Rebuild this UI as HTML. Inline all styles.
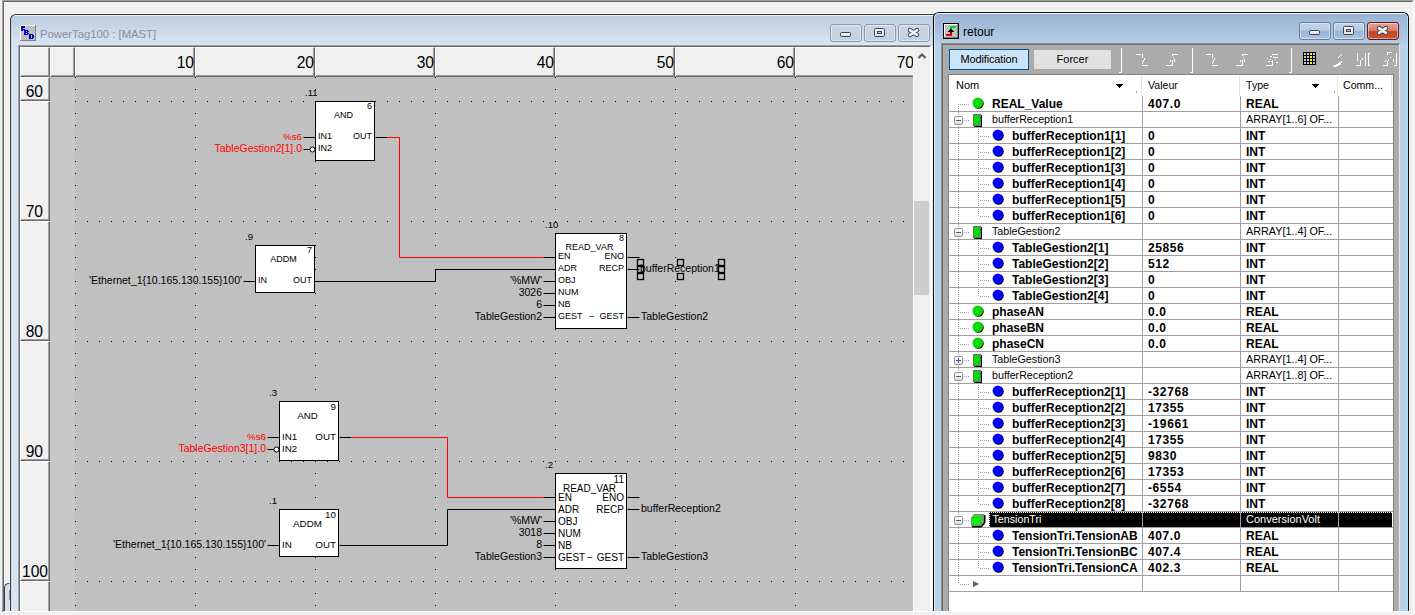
<!DOCTYPE html><html><head><meta charset="utf-8"><style>
html,body{margin:0;padding:0;}
body{width:1415px;height:615px;overflow:hidden;position:relative;background:#f0f0f0;font-family:"Liberation Sans", sans-serif;}
div{position:absolute;box-sizing:border-box;}
.t{white-space:nowrap;line-height:1;}
svg{position:absolute;left:0;top:0;overflow:visible;}
</style></head><body>
<div style="left:2px;top:0px;width:1412px;height:613px;border-left:1px solid #a0a0a0;border-top:1px solid #a0a0a0;border-right:1px solid #ffffff;border-bottom:1px solid #ffffff;"></div>
<div style="left:3px;top:1px;width:1410px;height:611px;border-left:1px solid #696969;border-top:1px solid #696969;border-right:1px solid #f0f0f0;border-bottom:1px solid #f0f0f0;"></div>
<div style="left:4px;top:583px;width:7px;height:29px;background:#d3e1ef;border-left:1px solid #3a3a3a;border-top:1px solid #3a3a3a;border-top-left-radius:5px;"></div>
<div style="left:9px;top:590px;width:2px;height:10px;background:#000;"></div>
<div style="left:10px;top:14px;width:925px;height:597px;border-radius:6px 0 0 0;background:linear-gradient(#bbccdc 0px,#d9e5f2 31px,#d7e4f2 32px);"></div>
<svg width="1415" height="615"><path d="M10.5 611V19.5A5 5 0 0 1 15.5 14.5H935" stroke="#3b3b3b" stroke-width="1.1" fill="none"/><path d="M9.5 611V19.5A6 6 0 0 1 15.5 13.5H935" stroke="#fff" stroke-width="0.8" fill="none" opacity="0.7"/></svg>
<div style="left:15px;top:15px;width:919px;height:1px;background:#eef3f8;"></div>
<svg width="1415" height="615" style="left:0;top:0" shape-rendering="crispEdges">
<rect x="20" y="25" width="16" height="16" fill="#c0c0c0"/>
<rect x="20" y="25" width="16" height="1" fill="#fff"/><rect x="20" y="25" width="1" height="16" fill="#fff"/>
<rect x="20" y="40" width="16" height="1" fill="#808080"/><rect x="35" y="25" width="1" height="16" fill="#808080"/>
<path fill="#0000c8" fill-rule="evenodd" d="M21 26h4v2h-2v1h2v1h-2v1h-2z M24 30h4v1h1v1h-1v1h1v1h-1v1h-4z M26 31v1h1v-1z M26 33v1h1v-1z M29 34h4v1h1v3h-1v1h-4z M31 35v3h1v-3z"/>
</svg>
<div class="t" style="left:40px;top:28.8px;font-size:11.3px;color:#8d8d9c;">PowerTag100 : [MAST]</div>
<div style="left:830px;top:24px;width:32px;height:18px;border:1px solid #8c9bb3;border-radius:3px;background:linear-gradient(#c9d6e4,#c3d1e0);box-shadow:inset 0 0 0 1px rgba(255,255,255,0.45);"></div>
<div style="left:840px;top:32px;width:11px;height:5px;background:linear-gradient(#fafafa,#e0e0e0);border:1px solid #3c4350;border-radius:1.5px;"></div>
<div style="left:864px;top:24px;width:32px;height:18px;border:1px solid #8c9bb3;border-radius:3px;background:linear-gradient(#c9d6e4,#c3d1e0);box-shadow:inset 0 0 0 1px rgba(255,255,255,0.45);"></div>
<div style="left:874px;top:28px;width:11px;height:9px;background:linear-gradient(#fafafa,#e0e0e0);border:1px solid #3c4350;border-radius:1.5px;"></div>
<div style="left:877px;top:31px;width:5px;height:3px;border:1px solid #3c4350;background:#b8c8dc;"></div>
<div style="left:898px;top:24px;width:32px;height:18px;border:1px solid #8c9bb3;border-radius:3px;background:linear-gradient(#c9d6e4,#c3d1e0);box-shadow:inset 0 0 0 1px rgba(255,255,255,0.45);"></div>
<svg width="1415" height="615"><path d="M910.0 30.2L917.0 34.8M917.0 30.2L910.0 34.8" stroke="#3c4350" stroke-width="4.6" stroke-linecap="round"/><path d="M910.0 30.2L917.0 34.8M917.0 30.2L910.0 34.8" stroke="#f6f6f6" stroke-width="2.6" stroke-linecap="round"/></svg>
<div style="left:18px;top:45px;width:913px;height:566px;background:#f0f0f0;border-left:1px solid #a0a0a0;border-top:1px solid #a0a0a0;"></div>
<div style="left:19px;top:46px;width:911px;height:1px;background:#696969;"></div>
<div style="left:19px;top:46px;width:1px;height:565px;background:#696969;"></div>
<div style="left:50px;top:77px;width:863px;height:534px;background:#c0c0c0;"></div>
<div style="left:50px;top:77px;width:25px;height:534px;background:#c7c7c7;"></div>
<div style="left:20px;top:47px;width:30px;height:30px;background:#f0f0f0;border-left:1px solid #fff;border-top:1px solid #fff;border-right:1px solid #696969;border-bottom:1px solid #696969;box-shadow:inset -1px -1px 0 #a0a0a0;"></div>
<div style="left:50px;top:47px;width:25px;height:30px;background:#f0f0f0;border-left:1px solid #fff;border-top:1px solid #fff;border-right:1px solid #696969;border-bottom:1px solid #696969;box-shadow:inset -1px -1px 0 #a0a0a0;"></div>
<div style="left:75px;top:47px;width:120px;height:30px;background:#f0f0f0;border-left:1px solid #fff;border-top:1px solid #fff;border-right:1px solid #696969;border-bottom:1px solid #696969;box-shadow:inset -1px -1px 0 #a0a0a0;"></div>
<div class="t" style="right:1221px;top:55px;font-size:15.6px;color:#000;">10</div>
<div style="left:195px;top:47px;width:120px;height:30px;background:#f0f0f0;border-left:1px solid #fff;border-top:1px solid #fff;border-right:1px solid #696969;border-bottom:1px solid #696969;box-shadow:inset -1px -1px 0 #a0a0a0;"></div>
<div class="t" style="right:1101px;top:55px;font-size:15.6px;color:#000;">20</div>
<div style="left:315px;top:47px;width:120px;height:30px;background:#f0f0f0;border-left:1px solid #fff;border-top:1px solid #fff;border-right:1px solid #696969;border-bottom:1px solid #696969;box-shadow:inset -1px -1px 0 #a0a0a0;"></div>
<div class="t" style="right:981px;top:55px;font-size:15.6px;color:#000;">30</div>
<div style="left:435px;top:47px;width:120px;height:30px;background:#f0f0f0;border-left:1px solid #fff;border-top:1px solid #fff;border-right:1px solid #696969;border-bottom:1px solid #696969;box-shadow:inset -1px -1px 0 #a0a0a0;"></div>
<div class="t" style="right:861px;top:55px;font-size:15.6px;color:#000;">40</div>
<div style="left:555px;top:47px;width:120px;height:30px;background:#f0f0f0;border-left:1px solid #fff;border-top:1px solid #fff;border-right:1px solid #696969;border-bottom:1px solid #696969;box-shadow:inset -1px -1px 0 #a0a0a0;"></div>
<div class="t" style="right:741px;top:55px;font-size:15.6px;color:#000;">50</div>
<div style="left:675px;top:47px;width:120px;height:30px;background:#f0f0f0;border-left:1px solid #fff;border-top:1px solid #fff;border-right:1px solid #696969;border-bottom:1px solid #696969;box-shadow:inset -1px -1px 0 #a0a0a0;"></div>
<div class="t" style="right:621px;top:55px;font-size:15.6px;color:#000;">60</div>
<div style="left:795px;top:47px;width:120px;height:30px;background:#f0f0f0;border-left:1px solid #fff;border-top:1px solid #fff;border-right:1px solid #696969;border-bottom:1px solid #696969;box-shadow:inset -1px -1px 0 #a0a0a0;"></div>
<div class="t" style="right:501px;top:55px;font-size:15.6px;color:#000;">70</div>
<div style="left:20px;top:77px;width:30px;height:24px;background:#f0f0f0;border-left:1px solid #fff;border-top:1px solid #fff;border-right:1px solid #696969;border-bottom:1px solid #696969;box-shadow:inset -1px -1px 0 #a0a0a0;"></div>
<div class="t" style="right:1372px;top:84px;font-size:15.6px;color:#000;">60</div>
<div style="left:20px;top:101px;width:30px;height:120px;background:#f0f0f0;border-left:1px solid #fff;border-top:1px solid #fff;border-right:1px solid #696969;border-bottom:1px solid #696969;box-shadow:inset -1px -1px 0 #a0a0a0;"></div>
<div class="t" style="right:1372px;top:204px;font-size:15.6px;color:#000;">70</div>
<div style="left:20px;top:221px;width:30px;height:120px;background:#f0f0f0;border-left:1px solid #fff;border-top:1px solid #fff;border-right:1px solid #696969;border-bottom:1px solid #696969;box-shadow:inset -1px -1px 0 #a0a0a0;"></div>
<div class="t" style="right:1372px;top:324px;font-size:15.6px;color:#000;">80</div>
<div style="left:20px;top:341px;width:30px;height:120px;background:#f0f0f0;border-left:1px solid #fff;border-top:1px solid #fff;border-right:1px solid #696969;border-bottom:1px solid #696969;box-shadow:inset -1px -1px 0 #a0a0a0;"></div>
<div class="t" style="right:1372px;top:444px;font-size:15.6px;color:#000;">90</div>
<div style="left:20px;top:461px;width:30px;height:120px;background:#f0f0f0;border-left:1px solid #fff;border-top:1px solid #fff;border-right:1px solid #696969;border-bottom:1px solid #696969;box-shadow:inset -1px -1px 0 #a0a0a0;"></div>
<div class="t" style="left:22px;top:564px;font-size:15.6px;color:#000;">100</div>
<div style="left:20px;top:581px;width:30px;height:44px;background:#f0f0f0;border-left:1px solid #fff;border-top:1px solid #fff;border-right:1px solid #696969;border-bottom:1px solid #696969;box-shadow:inset -1px -1px 0 #a0a0a0;"></div>
<div style="left:913px;top:47px;width:18px;height:564px;background:#f0f0f0;border-left:1px solid #fafafa;"></div>
<div style="left:914px;top:201px;width:15px;height:94px;background:#cdcdcd;"></div>
<svg width="1415" height="615"><path d="M918.5 58L922 54.5L925.5 58" stroke="#555" stroke-width="2.1" fill="none"/></svg>
<div style="left:930px;top:46px;width:3px;height:565px;background:#fafafa;"></div>
<svg width="1415" height="615" shape-rendering="crispEdges">
<defs>
<pattern id="ph" patternUnits="userSpaceOnUse" x="75" y="101" width="12" height="120"><rect width="1" height="1" fill="#000"/></pattern>
<pattern id="pv" patternUnits="userSpaceOnUse" x="75" y="77" width="120" height="12"><rect width="1" height="1" fill="#000"/></pattern>
</defs>
<rect x="75" y="77" width="838" height="534" fill="url(#ph)"/>
<rect x="75" y="77" width="838" height="534" fill="url(#pv)"/>
</svg>
<div style="left:315px;top:101px;width:60px;height:60px;background:#fff;border:1px solid #000;"></div>
<div class="t" style="left:305px;top:87.87px;font-size:9.6px;color:#000;">.11</div>
<div class="t" style="right:1043px;top:102.38px;font-size:9.0px;color:#000;letter-spacing:0px;">6</div>
<div class="t" style="left:313.5px;width:60px;text-align:center;top:111.38px;font-size:9.0px;color:#000;letter-spacing:0px;">AND</div>
<div class="t" style="left:318px;top:132.38px;font-size:9.0px;color:#000;letter-spacing:0px;">IN1</div>
<div class="t" style="left:318px;top:144.38px;font-size:9.0px;color:#000;letter-spacing:0px;">IN2</div>
<div class="t" style="right:1043px;top:132.38px;font-size:9.0px;color:#000;letter-spacing:0px;">OUT</div>
<div class="t" style="right:1113px;top:131.7px;font-size:9.8px;color:#f00;">%s6</div>
<div class="t" style="right:1113px;top:143.11px;font-size:10.5px;color:#f00;">TableGestion2[1].0</div>
<div style="left:255px;top:245px;width:60px;height:48px;background:#fff;border:1px solid #000;"></div>
<div class="t" style="left:245px;top:231.87px;font-size:9.6px;color:#000;">.9</div>
<div class="t" style="right:1103px;top:246.38px;font-size:9.0px;color:#000;letter-spacing:0px;">7</div>
<div class="t" style="left:253.5px;width:60px;text-align:center;top:255.38px;font-size:9.0px;color:#000;letter-spacing:0px;">ADDM</div>
<div class="t" style="left:258px;top:276.38px;font-size:9.0px;color:#000;letter-spacing:0px;">IN</div>
<div class="t" style="right:1103px;top:276.38px;font-size:9.0px;color:#000;letter-spacing:0px;">OUT</div>
<div class="t" style="right:1173px;top:275.11px;font-size:10.5px;color:#000;">'Ethernet_1{10.165.130.155}100'</div>
<div style="left:555px;top:233px;width:72px;height:96px;background:#fff;border:1px solid #000;"></div>
<div class="t" style="left:545px;top:219.87px;font-size:9.6px;color:#000;">.10</div>
<div class="t" style="right:791px;top:234.38px;font-size:9.0px;color:#000;letter-spacing:0px;">8</div>
<div class="t" style="left:553.5px;width:72px;text-align:center;top:243.38px;font-size:9.0px;color:#000;letter-spacing:0px;">READ_VAR</div>
<div class="t" style="left:558px;top:252.38px;font-size:9.0px;color:#000;letter-spacing:0px;">EN</div>
<div class="t" style="left:558px;top:264.38px;font-size:9.0px;color:#000;letter-spacing:0px;">ADR</div>
<div class="t" style="left:558px;top:276.38px;font-size:9.0px;color:#000;letter-spacing:0px;">OBJ</div>
<div class="t" style="left:558px;top:288.38px;font-size:9.0px;color:#000;letter-spacing:0px;">NUM</div>
<div class="t" style="left:558px;top:300.38px;font-size:9.0px;color:#000;letter-spacing:0px;">NB</div>
<div class="t" style="left:558px;top:312.38px;font-size:9.0px;color:#000;letter-spacing:0px;">GEST</div>
<div class="t" style="right:791px;top:252.38px;font-size:9.0px;color:#000;letter-spacing:0px;">ENO</div>
<div class="t" style="right:791px;top:264.38px;font-size:9.0px;color:#000;letter-spacing:0px;">RECP</div>
<div class="t" style="right:791px;top:312.38px;font-size:9.0px;color:#000;letter-spacing:0px;">GEST</div>
<div class="t" style="left:589px;top:312.38px;font-size:9px;">&ndash;</div>
<div class="t" style="right:873px;top:275.11px;font-size:10.5px;color:#000;">'%MW'</div>
<div class="t" style="right:873px;top:287.11px;font-size:10.5px;color:#000;">3026</div>
<div class="t" style="right:873px;top:299.11px;font-size:10.5px;color:#000;">6</div>
<div class="t" style="right:873px;top:311.11px;font-size:10.5px;color:#000;">TableGestion2</div>
<div class="t" style="left:640px;top:263.11px;font-size:10.5px;color:#000;">bufferReception1</div>
<div class="t" style="left:641px;top:311.11px;font-size:10.5px;color:#000;">TableGestion2</div>
<div style="left:279px;top:401px;width:60px;height:60px;background:#fff;border:1px solid #000;"></div>
<div class="t" style="left:269px;top:387.87px;font-size:9.6px;color:#000;">.3</div>
<div class="t" style="right:1079px;top:401.7px;font-size:9.8px;color:#000;letter-spacing:0px;">9</div>
<div class="t" style="left:277.5px;width:60px;text-align:center;top:410.7px;font-size:9.8px;color:#000;letter-spacing:0px;">AND</div>
<div class="t" style="left:282px;top:431.7px;font-size:9.8px;color:#000;letter-spacing:0px;">IN1</div>
<div class="t" style="left:282px;top:443.7px;font-size:9.8px;color:#000;letter-spacing:0px;">IN2</div>
<div class="t" style="right:1079px;top:431.7px;font-size:9.8px;color:#000;letter-spacing:0px;">OUT</div>
<div class="t" style="right:1149px;top:431.7px;font-size:9.8px;color:#f00;">%s6</div>
<div class="t" style="right:1149px;top:443.11px;font-size:10.5px;color:#f00;">TableGestion3[1].0</div>
<div style="left:279px;top:509px;width:60px;height:48px;background:#fff;border:1px solid #000;"></div>
<div class="t" style="left:269px;top:495.87px;font-size:9.6px;color:#000;">.1</div>
<div class="t" style="right:1079px;top:509.7px;font-size:9.8px;color:#000;letter-spacing:0px;">10</div>
<div class="t" style="left:277.5px;width:60px;text-align:center;top:518.7px;font-size:9.8px;color:#000;letter-spacing:0px;">ADDM</div>
<div class="t" style="left:282px;top:539.7px;font-size:9.8px;color:#000;letter-spacing:0px;">IN</div>
<div class="t" style="right:1079px;top:539.7px;font-size:9.8px;color:#000;letter-spacing:0px;">OUT</div>
<div class="t" style="right:1149px;top:539.11px;font-size:10.5px;color:#000;">'Ethernet_1{10.165.130.155}100'</div>
<div style="left:555px;top:473px;width:72px;height:96px;background:#fff;border:1px solid #000;"></div>
<div class="t" style="left:545px;top:459.87px;font-size:9.6px;color:#000;">.2</div>
<div class="t" style="right:791px;top:474.54px;font-size:10px;color:#000;letter-spacing:0px;">11</div>
<div class="t" style="left:553.5px;width:72px;text-align:center;top:483.54px;font-size:10px;color:#000;letter-spacing:0px;">READ_VAR</div>
<div class="t" style="left:558px;top:492.54px;font-size:10px;color:#000;letter-spacing:0px;">EN</div>
<div class="t" style="left:558px;top:504.54px;font-size:10px;color:#000;letter-spacing:0px;">ADR</div>
<div class="t" style="left:558px;top:516.53px;font-size:10px;color:#000;letter-spacing:0px;">OBJ</div>
<div class="t" style="left:558px;top:528.53px;font-size:10px;color:#000;letter-spacing:0px;">NUM</div>
<div class="t" style="left:558px;top:540.53px;font-size:10px;color:#000;letter-spacing:0px;">NB</div>
<div class="t" style="left:558px;top:552.53px;font-size:10px;color:#000;letter-spacing:0px;">GEST</div>
<div class="t" style="right:791px;top:492.54px;font-size:10px;color:#000;letter-spacing:0px;">ENO</div>
<div class="t" style="right:791px;top:504.54px;font-size:10px;color:#000;letter-spacing:0px;">RECP</div>
<div class="t" style="right:791px;top:552.53px;font-size:10px;color:#000;letter-spacing:0px;">GEST</div>
<div class="t" style="left:587px;top:552.53px;font-size:10px;">&minus;</div>
<div class="t" style="right:873px;top:515.11px;font-size:10.5px;color:#000;">'%MW'</div>
<div class="t" style="right:873px;top:527.11px;font-size:10.5px;color:#000;">3018</div>
<div class="t" style="right:873px;top:539.11px;font-size:10.5px;color:#000;">8</div>
<div class="t" style="right:873px;top:551.11px;font-size:10.5px;color:#000;">TableGestion3</div>
<div class="t" style="left:641px;top:503.11px;font-size:10.5px;color:#000;">bufferReception2</div>
<div class="t" style="left:641px;top:551.11px;font-size:10.5px;color:#000;">TableGestion3</div>
<svg width="1415" height="615"><path d="M303.5 137.5L315.5 137.5" stroke="#000" stroke-width="1"/><path d="M303.5 149.5L310.5 149.5" stroke="#000" stroke-width="1"/><circle cx="312.5" cy="149.5" r="2.5" fill="#fff" stroke="#000"/><path d="M375.5 137.5L387.5 137.5" stroke="#000" stroke-width="1"/><path d="M387.5 137.5L399.5 137.5" stroke="#f00" stroke-width="1"/><path d="M399.5 137.5L399.5 257.5" stroke="#f00" stroke-width="1"/><path d="M399.5 257.5L543.5 257.5" stroke="#f00" stroke-width="1"/><path d="M543.5 257.5L555.5 257.5" stroke="#000" stroke-width="1"/><path d="M243.5 281.5L255.5 281.5" stroke="#000" stroke-width="1"/><path d="M315.5 281.5L435.5 281.5" stroke="#000" stroke-width="1"/><path d="M435.5 281.5L435.5 269.5" stroke="#000" stroke-width="1"/><path d="M435.5 269.5L555.5 269.5" stroke="#000" stroke-width="1"/><path d="M543.5 281.5L555.5 281.5" stroke="#000" stroke-width="1"/><path d="M543.5 293.5L555.5 293.5" stroke="#000" stroke-width="1"/><path d="M543.5 305.5L555.5 305.5" stroke="#000" stroke-width="1"/><path d="M543.5 317.5L555.5 317.5" stroke="#000" stroke-width="1"/><path d="M627.5 257.5L639.5 257.5" stroke="#000" stroke-width="1"/><path d="M627.5 269.5L639.5 269.5" stroke="#000" stroke-width="1"/><path d="M627.5 317.5L639.5 317.5" stroke="#000" stroke-width="1"/><rect x="637.5" y="259.5" width="6" height="6" fill="none" stroke="#000" stroke-width="1.3"/><rect x="637.5" y="266.5" width="6" height="6" fill="none" stroke="#000" stroke-width="1.3"/><rect x="637.5" y="273.5" width="6" height="6" fill="none" stroke="#000" stroke-width="1.3"/><rect x="677.5" y="259.5" width="6" height="6" fill="none" stroke="#000" stroke-width="1.3"/><rect x="677.5" y="273.5" width="6" height="6" fill="none" stroke="#000" stroke-width="1.3"/><rect x="718.5" y="259.5" width="6" height="6" fill="none" stroke="#000" stroke-width="1.3"/><rect x="718.5" y="266.5" width="6" height="6" fill="none" stroke="#000" stroke-width="1.3"/><rect x="718.5" y="273.5" width="6" height="6" fill="none" stroke="#000" stroke-width="1.3"/><path d="M267.5 437.5L279.5 437.5" stroke="#000" stroke-width="1"/><path d="M267.5 449.5L274.5 449.5" stroke="#000" stroke-width="1"/><circle cx="276.5" cy="449.5" r="2.5" fill="#fff" stroke="#000"/><path d="M339.5 437.5L351.5 437.5" stroke="#000" stroke-width="1"/><path d="M351.5 437.5L447.5 437.5" stroke="#f00" stroke-width="1"/><path d="M447.5 437.5L447.5 497.5" stroke="#f00" stroke-width="1"/><path d="M447.5 497.5L543.5 497.5" stroke="#f00" stroke-width="1"/><path d="M543.5 497.5L555.5 497.5" stroke="#000" stroke-width="1"/><path d="M267.5 545.5L279.5 545.5" stroke="#000" stroke-width="1"/><path d="M339.5 545.5L447.5 545.5" stroke="#000" stroke-width="1"/><path d="M447.5 545.5L447.5 509.5" stroke="#000" stroke-width="1"/><path d="M447.5 509.5L555.5 509.5" stroke="#000" stroke-width="1"/><path d="M543.5 521.5L555.5 521.5" stroke="#000" stroke-width="1"/><path d="M543.5 533.5L555.5 533.5" stroke="#000" stroke-width="1"/><path d="M543.5 545.5L555.5 545.5" stroke="#000" stroke-width="1"/><path d="M543.5 557.5L555.5 557.5" stroke="#000" stroke-width="1"/><path d="M627.5 497.5L639.5 497.5" stroke="#000" stroke-width="1"/><path d="M627.5 509.5L639.5 509.5" stroke="#000" stroke-width="1"/><path d="M627.5 557.5L639.5 557.5" stroke="#000" stroke-width="1"/></svg>
<div style="left:933px;top:12px;width:476px;height:599px;border-radius:6px 6px 0 0;background:linear-gradient(#98b2d0 0px,#b4cce6 31px,#b9d1ea 32px);"></div>
<svg width="1415" height="615"><path d="M933.5 611V17.5A5 5 0 0 1 938.5 12.5H1403.5A5 5 0 0 1 1408.5 17.5V611" stroke="#111" stroke-width="1.1" fill="none"/><path d="M933 14.5A6 6 0 0 1 938.5 11.5H1403.5A6 6 0 0 1 1409.5 17.5V611" stroke="#fff" stroke-width="0.8" fill="none" opacity="0.7"/><path d="M934.5 611V18A4 4 0 0 1 938.5 13.5" stroke="#fff" stroke-width="1" fill="none" opacity="0.6"/></svg>
<div style="left:937px;top:13px;width:468px;height:1px;background:#f0f6fc;"></div>
<div style="left:1407px;top:16px;width:1px;height:595px;background:#9fe6fb;"></div>
<svg width="1415" height="615" shape-rendering="crispEdges">
<rect x="943" y="23" width="16" height="16" fill="#000"/>
<rect x="944" y="24" width="14" height="14" fill="#c0c0c0"/>
<rect x="944" y="24" width="14" height="1" fill="#fff"/><rect x="944" y="24" width="1" height="14" fill="#fff"/>
<rect x="944" y="37" width="14" height="1" fill="#808080"/><rect x="957" y="24" width="1" height="14" fill="#808080"/>
<rect x="950" y="26" width="6" height="2" fill="#00e000"/><rect x="950" y="27" width="2" height="3" fill="#00c000"/>
<path d="M948 31h6v1h-6z M949 30h4v1h-4z M950 29h2v1h-2z" fill="#000"/>
<rect x="950" y="32" width="2" height="3" fill="#a00000"/><rect x="946" y="34" width="6" height="2" fill="#f00000"/>
</svg>
<div class="t" style="left:963px;top:26.2px;font-size:12px;color:#000;">retour</div>
<div style="left:1299px;top:22px;width:32px;height:18px;border:1px solid #6a7f9c;border-radius:3px;background:linear-gradient(#c3d5ea 0%,#b4c9e3 45%,#97b3d6 55%,#a9c3e2 100%);box-shadow:inset 0 0 0 1px rgba(255,255,255,0.45);"></div>
<div style="left:1309px;top:30px;width:11px;height:5px;background:linear-gradient(#fafafa,#e0e0e0);border:1px solid #3c4350;border-radius:1.5px;"></div>
<div style="left:1333px;top:22px;width:32px;height:18px;border:1px solid #6a7f9c;border-radius:3px;background:linear-gradient(#c3d5ea 0%,#b4c9e3 45%,#97b3d6 55%,#a9c3e2 100%);box-shadow:inset 0 0 0 1px rgba(255,255,255,0.45);"></div>
<div style="left:1343px;top:26px;width:11px;height:9px;background:linear-gradient(#fafafa,#e0e0e0);border:1px solid #3c4350;border-radius:1.5px;"></div>
<div style="left:1346px;top:29px;width:5px;height:3px;border:1px solid #3c4350;background:#b8c8dc;"></div>
<div style="left:1367px;top:22px;width:32px;height:18px;border:1px solid #5a1c1c;border-radius:3px;background:linear-gradient(#e8a395 0%,#d9826f 45%,#c0452a 55%,#c75436 100%);box-shadow:inset 0 0 0 1px rgba(255,255,255,0.45);"></div>
<svg width="1415" height="615"><path d="M1379.0 28.2L1386.0 32.8M1386.0 28.2L1379.0 32.8" stroke="#3c4350" stroke-width="4.6" stroke-linecap="round"/><path d="M1379.0 28.2L1386.0 32.8M1386.0 28.2L1379.0 32.8" stroke="#f6f6f6" stroke-width="2.6" stroke-linecap="round"/></svg>
<div style="left:941px;top:43px;width:459px;height:568px;background:#ababab;border-left:1px solid #8f8f8f;border-top:1px solid #8f8f8f;box-shadow:inset 1px 1px 0 #6e6e6e;"></div>
<div style="left:1399px;top:44px;width:1px;height:567px;background:#e8e8e8;"></div>
<div style="left:949px;top:49px;width:80px;height:21px;background:#cce4f7;border:1px solid #005499;"></div>
<div class="t" style="left:949px;top:54px;font-size:11px;letter-spacing:-0.15px;color:#000;"><span style="display:inline-block;width:80px;text-align:center;">Modification</span></div>
<div style="left:1034px;top:50px;width:77px;height:19px;background:#e1e1e1;"></div>
<div class="t" style="left:1034px;top:54px;font-size:11px;color:#000;"><span style="display:inline-block;width:77px;text-align:center;">Forcer</span></div>
<svg width="1415" height="615" shape-rendering="crispEdges"><g fill="#ffffff"><rect x="1121" y="48" width="1" height="25"/><rect x="1119" y="72" width="2" height="1"/><rect x="1192" y="48" width="1" height="25"/><rect x="1190" y="72" width="2" height="1"/><rect x="1291" y="48" width="1" height="25"/><rect x="1289" y="72" width="2" height="1"/><rect x="1136" y="54" width="5" height="1"/><rect x="1142" y="54" width="1" height="4"/><rect x="1144" y="58" width="1" height="2"/><rect x="1143" y="60" width="1" height="2"/><rect x="1142" y="62" width="1" height="2"/><rect x="1142" y="65" width="6" height="1"/><rect x="1172" y="54" width="6" height="1"/><rect x="1172" y="55" width="1" height="1"/><rect x="1173" y="57" width="1" height="1"/><rect x="1174" y="59" width="1" height="3"/><rect x="1170" y="60" width="1" height="2"/><rect x="1172" y="60" width="1" height="6"/><rect x="1166" y="65" width="6" height="1"/><rect x="1206" y="54" width="5" height="1"/><rect x="1212" y="54" width="1" height="4"/><rect x="1214" y="58" width="1" height="2"/><rect x="1213" y="60" width="1" height="2"/><rect x="1212" y="62" width="1" height="2"/><rect x="1212" y="65" width="6" height="1"/><rect x="1242" y="54" width="6" height="1"/><rect x="1242" y="55" width="1" height="1"/><rect x="1243" y="57" width="1" height="1"/><rect x="1244" y="59" width="1" height="3"/><rect x="1240" y="60" width="1" height="2"/><rect x="1242" y="60" width="1" height="6"/><rect x="1236" y="65" width="6" height="1"/><rect x="1272" y="54" width="6" height="1"/><rect x="1270" y="56" width="2" height="1"/><rect x="1273" y="57" width="5" height="1"/><rect x="1267" y="58" width="1" height="1"/><rect x="1270" y="59" width="1" height="1"/><rect x="1275" y="59" width="1" height="1"/><rect x="1268" y="61" width="2" height="1"/><rect x="1271" y="61" width="1" height="1"/><rect x="1276" y="62" width="2" height="1"/><rect x="1272" y="60" width="1" height="6"/><rect x="1266" y="65" width="6" height="1"/><path d="M1341.5 54.5L1337.5 58.5M1342.5 61.5L1333.5 66.5M1341.5 63.5L1335.5 66.5" stroke="#fff" stroke-width="1.2" fill="none"/><rect x="1357" y="53" width="1" height="8"/><rect x="1360" y="60" width="1" height="6"/><rect x="1356" y="65" width="4" height="1"/><rect x="1362" y="58" width="1" height="2"/><rect x="1365" y="53" width="1" height="13"/><rect x="1368" y="53" width="1" height="13"/><rect x="1368" y="53" width="2" height="1"/><rect x="1368" y="65" width="2" height="1"/><rect x="1387" y="52" width="5" height="1"/><rect x="1387" y="52" width="1" height="3"/><rect x="1390" y="57" width="1" height="1"/><rect x="1388" y="59" width="1" height="2"/><rect x="1385" y="60" width="1" height="2"/><rect x="1393" y="59" width="1" height="3"/><rect x="1387" y="61" width="1" height="5"/><rect x="1383" y="65" width="5" height="1"/><rect x="1396" y="53" width="1" height="13"/><rect x="1394" y="65" width="3" height="1"/></g><rect x="1303" y="52" width="13" height="13" fill="#000"/><rect x="1304" y="53" width="2" height="2" fill="#c8c8c8"/><rect x="1304" y="56" width="2" height="2" fill="#c8c8c8"/><rect x="1304" y="59" width="2" height="2" fill="#c8c8c8"/><rect x="1304" y="62" width="2" height="2" fill="#c8c8c8"/><rect x="1307" y="53" width="2" height="2" fill="#c8c8c8"/><rect x="1307" y="56" width="2" height="2" fill="#c8c8c8"/><rect x="1307" y="59" width="2" height="2" fill="#c8c8c8"/><rect x="1307" y="62" width="2" height="2" fill="#c8c8c8"/><rect x="1310" y="53" width="2" height="2" fill="#ffff00"/><rect x="1310" y="56" width="2" height="2" fill="#ffff00"/><rect x="1310" y="59" width="2" height="2" fill="#ffff00"/><rect x="1310" y="62" width="2" height="2" fill="#ffff00"/><rect x="1313" y="53" width="2" height="2" fill="#c8c8c8"/><rect x="1313" y="56" width="2" height="2" fill="#c8c8c8"/><rect x="1313" y="59" width="2" height="2" fill="#c8c8c8"/><rect x="1313" y="62" width="2" height="2" fill="#c8c8c8"/></svg>
<div style="left:948px;top:74px;width:446px;height:537px;background:#fff;border-left:1px solid #828282;border-top:1px solid #828282;border-right:1px solid #828282;"></div>
<div class="t" style="left:956px;top:80px;font-size:11px;color:#000;">Nom</div>
<div class="t" style="left:1148px;top:80px;font-size:10.6px;color:#000;">Valeur</div>
<div class="t" style="left:1246px;top:80px;font-size:10.6px;color:#000;">Type</div>
<div class="t" style="left:1343px;top:80px;font-size:10.6px;color:#000;">Comm...</div>
<svg width="1415" height="615" shape-rendering="crispEdges"><path d="M1115 84h8l-4 4z M1311 84h8l-4 4z" fill="#000"/></svg>
<div style="left:1141px;top:76px;width:1px;height:20px;background:#e5e5e5;"></div>
<div style="left:1142px;top:76px;width:1px;height:20px;background:#ffffff;"></div>
<div style="left:1239px;top:76px;width:1px;height:20px;background:#e5e5e5;"></div>
<div style="left:1240px;top:76px;width:1px;height:20px;background:#ffffff;"></div>
<div style="left:1337px;top:76px;width:1px;height:20px;background:#e5e5e5;"></div>
<div style="left:1338px;top:76px;width:1px;height:20px;background:#ffffff;"></div>
<div style="left:1391px;top:76px;width:1px;height:20px;background:#e5e5e5;"></div>
<div style="left:1392px;top:76px;width:1px;height:20px;background:#ffffff;"></div>
<div style="left:949px;top:111px;width:444px;height:1px;background:#a0a0a0;"></div>
<div style="left:949px;top:127px;width:444px;height:1px;background:#a0a0a0;"></div>
<div style="left:949px;top:143px;width:444px;height:1px;background:#a0a0a0;"></div>
<div style="left:949px;top:159px;width:444px;height:1px;background:#a0a0a0;"></div>
<div style="left:949px;top:175px;width:444px;height:1px;background:#a0a0a0;"></div>
<div style="left:949px;top:191px;width:444px;height:1px;background:#a0a0a0;"></div>
<div style="left:949px;top:207px;width:444px;height:1px;background:#a0a0a0;"></div>
<div style="left:949px;top:223px;width:444px;height:1px;background:#a0a0a0;"></div>
<div style="left:949px;top:239px;width:444px;height:1px;background:#a0a0a0;"></div>
<div style="left:949px;top:255px;width:444px;height:1px;background:#a0a0a0;"></div>
<div style="left:949px;top:271px;width:444px;height:1px;background:#a0a0a0;"></div>
<div style="left:949px;top:287px;width:444px;height:1px;background:#a0a0a0;"></div>
<div style="left:949px;top:303px;width:444px;height:1px;background:#a0a0a0;"></div>
<div style="left:949px;top:319px;width:444px;height:1px;background:#a0a0a0;"></div>
<div style="left:949px;top:335px;width:444px;height:1px;background:#a0a0a0;"></div>
<div style="left:949px;top:351px;width:444px;height:1px;background:#a0a0a0;"></div>
<div style="left:949px;top:367px;width:444px;height:1px;background:#a0a0a0;"></div>
<div style="left:949px;top:383px;width:444px;height:1px;background:#a0a0a0;"></div>
<div style="left:949px;top:399px;width:444px;height:1px;background:#a0a0a0;"></div>
<div style="left:949px;top:415px;width:444px;height:1px;background:#a0a0a0;"></div>
<div style="left:949px;top:431px;width:444px;height:1px;background:#a0a0a0;"></div>
<div style="left:949px;top:447px;width:444px;height:1px;background:#a0a0a0;"></div>
<div style="left:949px;top:463px;width:444px;height:1px;background:#a0a0a0;"></div>
<div style="left:949px;top:479px;width:444px;height:1px;background:#a0a0a0;"></div>
<div style="left:949px;top:495px;width:444px;height:1px;background:#a0a0a0;"></div>
<div style="left:949px;top:511px;width:444px;height:1px;background:#a0a0a0;"></div>
<div style="left:949px;top:527px;width:444px;height:1px;background:#a0a0a0;"></div>
<div style="left:949px;top:543px;width:444px;height:1px;background:#a0a0a0;"></div>
<div style="left:949px;top:559px;width:444px;height:1px;background:#a0a0a0;"></div>
<div style="left:949px;top:575px;width:444px;height:1px;background:#a0a0a0;"></div>
<div style="left:949px;top:591px;width:444px;height:1px;background:#a0a0a0;"></div>
<div class="t" style="left:992px;top:98px;font-size:12px;font-weight:bold;color:#000;">REAL_Value</div>
<div class="t" style="left:1148px;top:98px;font-size:12px;font-weight:bold;color:#000;letter-spacing:0.6px;">407.0</div>
<div class="t" style="left:1246px;top:98px;font-size:12px;font-weight:bold;color:#000;">REAL</div>
<div class="t" style="left:992px;top:114px;font-size:10.7px;color:#000;">bufferReception1</div>
<div class="t" style="left:1246px;top:114px;font-size:10.8px;color:#000;">ARRAY[1..6] OF...</div>
<div class="t" style="left:1012px;top:130px;font-size:12px;font-weight:bold;color:#000;">bufferReception1[1]</div>
<div class="t" style="left:1148px;top:130px;font-size:12px;font-weight:bold;color:#000;letter-spacing:0.6px;">0</div>
<div class="t" style="left:1246px;top:130px;font-size:12px;font-weight:bold;color:#000;">INT</div>
<div class="t" style="left:1012px;top:146px;font-size:12px;font-weight:bold;color:#000;">bufferReception1[2]</div>
<div class="t" style="left:1148px;top:146px;font-size:12px;font-weight:bold;color:#000;letter-spacing:0.6px;">0</div>
<div class="t" style="left:1246px;top:146px;font-size:12px;font-weight:bold;color:#000;">INT</div>
<div class="t" style="left:1012px;top:162px;font-size:12px;font-weight:bold;color:#000;">bufferReception1[3]</div>
<div class="t" style="left:1148px;top:162px;font-size:12px;font-weight:bold;color:#000;letter-spacing:0.6px;">0</div>
<div class="t" style="left:1246px;top:162px;font-size:12px;font-weight:bold;color:#000;">INT</div>
<div class="t" style="left:1012px;top:178px;font-size:12px;font-weight:bold;color:#000;">bufferReception1[4]</div>
<div class="t" style="left:1148px;top:178px;font-size:12px;font-weight:bold;color:#000;letter-spacing:0.6px;">0</div>
<div class="t" style="left:1246px;top:178px;font-size:12px;font-weight:bold;color:#000;">INT</div>
<div class="t" style="left:1012px;top:194px;font-size:12px;font-weight:bold;color:#000;">bufferReception1[5]</div>
<div class="t" style="left:1148px;top:194px;font-size:12px;font-weight:bold;color:#000;letter-spacing:0.6px;">0</div>
<div class="t" style="left:1246px;top:194px;font-size:12px;font-weight:bold;color:#000;">INT</div>
<div class="t" style="left:1012px;top:210px;font-size:12px;font-weight:bold;color:#000;">bufferReception1[6]</div>
<div class="t" style="left:1148px;top:210px;font-size:12px;font-weight:bold;color:#000;letter-spacing:0.6px;">0</div>
<div class="t" style="left:1246px;top:210px;font-size:12px;font-weight:bold;color:#000;">INT</div>
<div class="t" style="left:992px;top:226px;font-size:10.7px;color:#000;">TableGestion2</div>
<div class="t" style="left:1246px;top:226px;font-size:10.8px;color:#000;">ARRAY[1..4] OF...</div>
<div class="t" style="left:1012px;top:242px;font-size:12px;font-weight:bold;color:#000;">TableGestion2[1]</div>
<div class="t" style="left:1148px;top:242px;font-size:12px;font-weight:bold;color:#000;letter-spacing:0.6px;">25856</div>
<div class="t" style="left:1246px;top:242px;font-size:12px;font-weight:bold;color:#000;">INT</div>
<div class="t" style="left:1012px;top:258px;font-size:12px;font-weight:bold;color:#000;">TableGestion2[2]</div>
<div class="t" style="left:1148px;top:258px;font-size:12px;font-weight:bold;color:#000;letter-spacing:0.6px;">512</div>
<div class="t" style="left:1246px;top:258px;font-size:12px;font-weight:bold;color:#000;">INT</div>
<div class="t" style="left:1012px;top:274px;font-size:12px;font-weight:bold;color:#000;">TableGestion2[3]</div>
<div class="t" style="left:1148px;top:274px;font-size:12px;font-weight:bold;color:#000;letter-spacing:0.6px;">0</div>
<div class="t" style="left:1246px;top:274px;font-size:12px;font-weight:bold;color:#000;">INT</div>
<div class="t" style="left:1012px;top:290px;font-size:12px;font-weight:bold;color:#000;">TableGestion2[4]</div>
<div class="t" style="left:1148px;top:290px;font-size:12px;font-weight:bold;color:#000;letter-spacing:0.6px;">0</div>
<div class="t" style="left:1246px;top:290px;font-size:12px;font-weight:bold;color:#000;">INT</div>
<div class="t" style="left:992px;top:306px;font-size:12px;font-weight:bold;color:#000;">phaseAN</div>
<div class="t" style="left:1148px;top:306px;font-size:12px;font-weight:bold;color:#000;letter-spacing:0.6px;">0.0</div>
<div class="t" style="left:1246px;top:306px;font-size:12px;font-weight:bold;color:#000;">REAL</div>
<div class="t" style="left:992px;top:322px;font-size:12px;font-weight:bold;color:#000;">phaseBN</div>
<div class="t" style="left:1148px;top:322px;font-size:12px;font-weight:bold;color:#000;letter-spacing:0.6px;">0.0</div>
<div class="t" style="left:1246px;top:322px;font-size:12px;font-weight:bold;color:#000;">REAL</div>
<div class="t" style="left:992px;top:338px;font-size:12px;font-weight:bold;color:#000;">phaseCN</div>
<div class="t" style="left:1148px;top:338px;font-size:12px;font-weight:bold;color:#000;letter-spacing:0.6px;">0.0</div>
<div class="t" style="left:1246px;top:338px;font-size:12px;font-weight:bold;color:#000;">REAL</div>
<div class="t" style="left:992px;top:354px;font-size:10.7px;color:#000;">TableGestion3</div>
<div class="t" style="left:1246px;top:354px;font-size:10.8px;color:#000;">ARRAY[1..4] OF...</div>
<div class="t" style="left:992px;top:370px;font-size:10.7px;color:#000;">bufferReception2</div>
<div class="t" style="left:1246px;top:370px;font-size:10.8px;color:#000;">ARRAY[1..8] OF...</div>
<div class="t" style="left:1012px;top:386px;font-size:12px;font-weight:bold;color:#000;">bufferReception2[1]</div>
<div class="t" style="left:1148px;top:386px;font-size:12px;font-weight:bold;color:#000;letter-spacing:0.6px;">-32768</div>
<div class="t" style="left:1246px;top:386px;font-size:12px;font-weight:bold;color:#000;">INT</div>
<div class="t" style="left:1012px;top:402px;font-size:12px;font-weight:bold;color:#000;">bufferReception2[2]</div>
<div class="t" style="left:1148px;top:402px;font-size:12px;font-weight:bold;color:#000;letter-spacing:0.6px;">17355</div>
<div class="t" style="left:1246px;top:402px;font-size:12px;font-weight:bold;color:#000;">INT</div>
<div class="t" style="left:1012px;top:418px;font-size:12px;font-weight:bold;color:#000;">bufferReception2[3]</div>
<div class="t" style="left:1148px;top:418px;font-size:12px;font-weight:bold;color:#000;letter-spacing:0.6px;">-19661</div>
<div class="t" style="left:1246px;top:418px;font-size:12px;font-weight:bold;color:#000;">INT</div>
<div class="t" style="left:1012px;top:434px;font-size:12px;font-weight:bold;color:#000;">bufferReception2[4]</div>
<div class="t" style="left:1148px;top:434px;font-size:12px;font-weight:bold;color:#000;letter-spacing:0.6px;">17355</div>
<div class="t" style="left:1246px;top:434px;font-size:12px;font-weight:bold;color:#000;">INT</div>
<div class="t" style="left:1012px;top:450px;font-size:12px;font-weight:bold;color:#000;">bufferReception2[5]</div>
<div class="t" style="left:1148px;top:450px;font-size:12px;font-weight:bold;color:#000;letter-spacing:0.6px;">9830</div>
<div class="t" style="left:1246px;top:450px;font-size:12px;font-weight:bold;color:#000;">INT</div>
<div class="t" style="left:1012px;top:466px;font-size:12px;font-weight:bold;color:#000;">bufferReception2[6]</div>
<div class="t" style="left:1148px;top:466px;font-size:12px;font-weight:bold;color:#000;letter-spacing:0.6px;">17353</div>
<div class="t" style="left:1246px;top:466px;font-size:12px;font-weight:bold;color:#000;">INT</div>
<div class="t" style="left:1012px;top:482px;font-size:12px;font-weight:bold;color:#000;">bufferReception2[7]</div>
<div class="t" style="left:1148px;top:482px;font-size:12px;font-weight:bold;color:#000;letter-spacing:0.6px;">-6554</div>
<div class="t" style="left:1246px;top:482px;font-size:12px;font-weight:bold;color:#000;">INT</div>
<div class="t" style="left:1012px;top:498px;font-size:12px;font-weight:bold;color:#000;">bufferReception2[8]</div>
<div class="t" style="left:1148px;top:498px;font-size:12px;font-weight:bold;color:#000;letter-spacing:0.6px;">-32768</div>
<div class="t" style="left:1246px;top:498px;font-size:12px;font-weight:bold;color:#000;">INT</div>
<div style="left:989px;top:512px;width:403px;height:15px;background:#000;border-top:1px dotted #fff;border-left:1px dotted #fff;"></div>
<div class="t" style="left:992.5px;top:514px;font-size:10.7px;color:#fff;">TensionTri</div>
<div class="t" style="left:1246px;top:514px;font-size:11px;color:#fff;">ConversionVolt</div>
<div class="t" style="left:1012px;top:530px;font-size:12px;font-weight:bold;color:#000;">TensionTri.TensionAB</div>
<div class="t" style="left:1148px;top:530px;font-size:12px;font-weight:bold;color:#000;letter-spacing:0.6px;">407.0</div>
<div class="t" style="left:1246px;top:530px;font-size:12px;font-weight:bold;color:#000;">REAL</div>
<div class="t" style="left:1012px;top:546px;font-size:12px;font-weight:bold;color:#000;">TensionTri.TensionBC</div>
<div class="t" style="left:1148px;top:546px;font-size:12px;font-weight:bold;color:#000;letter-spacing:0.6px;">407.4</div>
<div class="t" style="left:1246px;top:546px;font-size:12px;font-weight:bold;color:#000;">REAL</div>
<div class="t" style="left:1012px;top:562px;font-size:12px;font-weight:bold;color:#000;">TensionTri.TensionCA</div>
<div class="t" style="left:1148px;top:562px;font-size:12px;font-weight:bold;color:#000;letter-spacing:0.6px;">402.3</div>
<div class="t" style="left:1246px;top:562px;font-size:12px;font-weight:bold;color:#000;">REAL</div>
<svg width="1415" height="615" shape-rendering="crispEdges"><g fill="#a0a0a0"><rect x="958" y="104" width="1" height="1"/><rect x="958" y="106" width="1" height="1"/><rect x="958" y="108" width="1" height="1"/><rect x="958" y="110" width="1" height="1"/><rect x="958" y="112" width="1" height="1"/><rect x="958" y="114" width="1" height="1"/><rect x="958" y="116" width="1" height="1"/><rect x="958" y="118" width="1" height="1"/><rect x="958" y="120" width="1" height="1"/><rect x="958" y="122" width="1" height="1"/><rect x="958" y="124" width="1" height="1"/><rect x="958" y="126" width="1" height="1"/><rect x="958" y="128" width="1" height="1"/><rect x="958" y="130" width="1" height="1"/><rect x="958" y="132" width="1" height="1"/><rect x="958" y="134" width="1" height="1"/><rect x="958" y="136" width="1" height="1"/><rect x="958" y="138" width="1" height="1"/><rect x="958" y="140" width="1" height="1"/><rect x="958" y="142" width="1" height="1"/><rect x="958" y="144" width="1" height="1"/><rect x="958" y="146" width="1" height="1"/><rect x="958" y="148" width="1" height="1"/><rect x="958" y="150" width="1" height="1"/><rect x="958" y="152" width="1" height="1"/><rect x="958" y="154" width="1" height="1"/><rect x="958" y="156" width="1" height="1"/><rect x="958" y="158" width="1" height="1"/><rect x="958" y="160" width="1" height="1"/><rect x="958" y="162" width="1" height="1"/><rect x="958" y="164" width="1" height="1"/><rect x="958" y="166" width="1" height="1"/><rect x="958" y="168" width="1" height="1"/><rect x="958" y="170" width="1" height="1"/><rect x="958" y="172" width="1" height="1"/><rect x="958" y="174" width="1" height="1"/><rect x="958" y="176" width="1" height="1"/><rect x="958" y="178" width="1" height="1"/><rect x="958" y="180" width="1" height="1"/><rect x="958" y="182" width="1" height="1"/><rect x="958" y="184" width="1" height="1"/><rect x="958" y="186" width="1" height="1"/><rect x="958" y="188" width="1" height="1"/><rect x="958" y="190" width="1" height="1"/><rect x="958" y="192" width="1" height="1"/><rect x="958" y="194" width="1" height="1"/><rect x="958" y="196" width="1" height="1"/><rect x="958" y="198" width="1" height="1"/><rect x="958" y="200" width="1" height="1"/><rect x="958" y="202" width="1" height="1"/><rect x="958" y="204" width="1" height="1"/><rect x="958" y="206" width="1" height="1"/><rect x="958" y="208" width="1" height="1"/><rect x="958" y="210" width="1" height="1"/><rect x="958" y="212" width="1" height="1"/><rect x="958" y="214" width="1" height="1"/><rect x="958" y="216" width="1" height="1"/><rect x="958" y="218" width="1" height="1"/><rect x="958" y="220" width="1" height="1"/><rect x="958" y="222" width="1" height="1"/><rect x="958" y="224" width="1" height="1"/><rect x="958" y="226" width="1" height="1"/><rect x="958" y="228" width="1" height="1"/><rect x="958" y="230" width="1" height="1"/><rect x="958" y="232" width="1" height="1"/><rect x="958" y="234" width="1" height="1"/><rect x="958" y="236" width="1" height="1"/><rect x="958" y="238" width="1" height="1"/><rect x="958" y="240" width="1" height="1"/><rect x="958" y="242" width="1" height="1"/><rect x="958" y="244" width="1" height="1"/><rect x="958" y="246" width="1" height="1"/><rect x="958" y="248" width="1" height="1"/><rect x="958" y="250" width="1" height="1"/><rect x="958" y="252" width="1" height="1"/><rect x="958" y="254" width="1" height="1"/><rect x="958" y="256" width="1" height="1"/><rect x="958" y="258" width="1" height="1"/><rect x="958" y="260" width="1" height="1"/><rect x="958" y="262" width="1" height="1"/><rect x="958" y="264" width="1" height="1"/><rect x="958" y="266" width="1" height="1"/><rect x="958" y="268" width="1" height="1"/><rect x="958" y="270" width="1" height="1"/><rect x="958" y="272" width="1" height="1"/><rect x="958" y="274" width="1" height="1"/><rect x="958" y="276" width="1" height="1"/><rect x="958" y="278" width="1" height="1"/><rect x="958" y="280" width="1" height="1"/><rect x="958" y="282" width="1" height="1"/><rect x="958" y="284" width="1" height="1"/><rect x="958" y="286" width="1" height="1"/><rect x="958" y="288" width="1" height="1"/><rect x="958" y="290" width="1" height="1"/><rect x="958" y="292" width="1" height="1"/><rect x="958" y="294" width="1" height="1"/><rect x="958" y="296" width="1" height="1"/><rect x="958" y="298" width="1" height="1"/><rect x="958" y="300" width="1" height="1"/><rect x="958" y="302" width="1" height="1"/><rect x="958" y="304" width="1" height="1"/><rect x="958" y="306" width="1" height="1"/><rect x="958" y="308" width="1" height="1"/><rect x="958" y="310" width="1" height="1"/><rect x="958" y="312" width="1" height="1"/><rect x="958" y="314" width="1" height="1"/><rect x="958" y="316" width="1" height="1"/><rect x="958" y="318" width="1" height="1"/><rect x="958" y="320" width="1" height="1"/><rect x="958" y="322" width="1" height="1"/><rect x="958" y="324" width="1" height="1"/><rect x="958" y="326" width="1" height="1"/><rect x="958" y="328" width="1" height="1"/><rect x="958" y="330" width="1" height="1"/><rect x="958" y="332" width="1" height="1"/><rect x="958" y="334" width="1" height="1"/><rect x="958" y="336" width="1" height="1"/><rect x="958" y="338" width="1" height="1"/><rect x="958" y="340" width="1" height="1"/><rect x="958" y="342" width="1" height="1"/><rect x="958" y="344" width="1" height="1"/><rect x="958" y="346" width="1" height="1"/><rect x="958" y="348" width="1" height="1"/><rect x="958" y="350" width="1" height="1"/><rect x="958" y="352" width="1" height="1"/><rect x="958" y="354" width="1" height="1"/><rect x="958" y="356" width="1" height="1"/><rect x="958" y="358" width="1" height="1"/><rect x="958" y="360" width="1" height="1"/><rect x="958" y="362" width="1" height="1"/><rect x="958" y="364" width="1" height="1"/><rect x="958" y="366" width="1" height="1"/><rect x="958" y="368" width="1" height="1"/><rect x="958" y="370" width="1" height="1"/><rect x="958" y="372" width="1" height="1"/><rect x="958" y="374" width="1" height="1"/><rect x="958" y="376" width="1" height="1"/><rect x="958" y="378" width="1" height="1"/><rect x="958" y="380" width="1" height="1"/><rect x="958" y="382" width="1" height="1"/><rect x="958" y="384" width="1" height="1"/><rect x="958" y="386" width="1" height="1"/><rect x="958" y="388" width="1" height="1"/><rect x="958" y="390" width="1" height="1"/><rect x="958" y="392" width="1" height="1"/><rect x="958" y="394" width="1" height="1"/><rect x="958" y="396" width="1" height="1"/><rect x="958" y="398" width="1" height="1"/><rect x="958" y="400" width="1" height="1"/><rect x="958" y="402" width="1" height="1"/><rect x="958" y="404" width="1" height="1"/><rect x="958" y="406" width="1" height="1"/><rect x="958" y="408" width="1" height="1"/><rect x="958" y="410" width="1" height="1"/><rect x="958" y="412" width="1" height="1"/><rect x="958" y="414" width="1" height="1"/><rect x="958" y="416" width="1" height="1"/><rect x="958" y="418" width="1" height="1"/><rect x="958" y="420" width="1" height="1"/><rect x="958" y="422" width="1" height="1"/><rect x="958" y="424" width="1" height="1"/><rect x="958" y="426" width="1" height="1"/><rect x="958" y="428" width="1" height="1"/><rect x="958" y="430" width="1" height="1"/><rect x="958" y="432" width="1" height="1"/><rect x="958" y="434" width="1" height="1"/><rect x="958" y="436" width="1" height="1"/><rect x="958" y="438" width="1" height="1"/><rect x="958" y="440" width="1" height="1"/><rect x="958" y="442" width="1" height="1"/><rect x="958" y="444" width="1" height="1"/><rect x="958" y="446" width="1" height="1"/><rect x="958" y="448" width="1" height="1"/><rect x="958" y="450" width="1" height="1"/><rect x="958" y="452" width="1" height="1"/><rect x="958" y="454" width="1" height="1"/><rect x="958" y="456" width="1" height="1"/><rect x="958" y="458" width="1" height="1"/><rect x="958" y="460" width="1" height="1"/><rect x="958" y="462" width="1" height="1"/><rect x="958" y="464" width="1" height="1"/><rect x="958" y="466" width="1" height="1"/><rect x="958" y="468" width="1" height="1"/><rect x="958" y="470" width="1" height="1"/><rect x="958" y="472" width="1" height="1"/><rect x="958" y="474" width="1" height="1"/><rect x="958" y="476" width="1" height="1"/><rect x="958" y="478" width="1" height="1"/><rect x="958" y="480" width="1" height="1"/><rect x="958" y="482" width="1" height="1"/><rect x="958" y="484" width="1" height="1"/><rect x="958" y="486" width="1" height="1"/><rect x="958" y="488" width="1" height="1"/><rect x="958" y="490" width="1" height="1"/><rect x="958" y="492" width="1" height="1"/><rect x="958" y="494" width="1" height="1"/><rect x="958" y="496" width="1" height="1"/><rect x="958" y="498" width="1" height="1"/><rect x="958" y="500" width="1" height="1"/><rect x="958" y="502" width="1" height="1"/><rect x="958" y="504" width="1" height="1"/><rect x="958" y="506" width="1" height="1"/><rect x="958" y="508" width="1" height="1"/><rect x="958" y="510" width="1" height="1"/><rect x="958" y="512" width="1" height="1"/><rect x="958" y="514" width="1" height="1"/><rect x="958" y="516" width="1" height="1"/><rect x="958" y="518" width="1" height="1"/><rect x="958" y="520" width="1" height="1"/><rect x="958" y="522" width="1" height="1"/><rect x="958" y="524" width="1" height="1"/><rect x="958" y="526" width="1" height="1"/><rect x="958" y="528" width="1" height="1"/><rect x="958" y="530" width="1" height="1"/><rect x="958" y="532" width="1" height="1"/><rect x="958" y="534" width="1" height="1"/><rect x="958" y="536" width="1" height="1"/><rect x="958" y="538" width="1" height="1"/><rect x="958" y="540" width="1" height="1"/><rect x="958" y="542" width="1" height="1"/><rect x="958" y="544" width="1" height="1"/><rect x="958" y="546" width="1" height="1"/><rect x="958" y="548" width="1" height="1"/><rect x="958" y="550" width="1" height="1"/><rect x="958" y="552" width="1" height="1"/><rect x="958" y="554" width="1" height="1"/><rect x="958" y="556" width="1" height="1"/><rect x="958" y="558" width="1" height="1"/><rect x="958" y="560" width="1" height="1"/><rect x="958" y="562" width="1" height="1"/><rect x="958" y="564" width="1" height="1"/><rect x="958" y="566" width="1" height="1"/><rect x="958" y="568" width="1" height="1"/><rect x="958" y="570" width="1" height="1"/><rect x="958" y="572" width="1" height="1"/><rect x="958" y="574" width="1" height="1"/><rect x="958" y="576" width="1" height="1"/><rect x="958" y="578" width="1" height="1"/><rect x="958" y="580" width="1" height="1"/><rect x="958" y="582" width="1" height="1"/><rect x="978" y="127" width="1" height="1"/><rect x="978" y="129" width="1" height="1"/><rect x="978" y="131" width="1" height="1"/><rect x="978" y="133" width="1" height="1"/><rect x="978" y="135" width="1" height="1"/><rect x="978" y="137" width="1" height="1"/><rect x="978" y="139" width="1" height="1"/><rect x="978" y="141" width="1" height="1"/><rect x="978" y="143" width="1" height="1"/><rect x="978" y="145" width="1" height="1"/><rect x="978" y="147" width="1" height="1"/><rect x="978" y="149" width="1" height="1"/><rect x="978" y="151" width="1" height="1"/><rect x="978" y="153" width="1" height="1"/><rect x="978" y="155" width="1" height="1"/><rect x="978" y="157" width="1" height="1"/><rect x="978" y="159" width="1" height="1"/><rect x="978" y="161" width="1" height="1"/><rect x="978" y="163" width="1" height="1"/><rect x="978" y="165" width="1" height="1"/><rect x="978" y="167" width="1" height="1"/><rect x="978" y="169" width="1" height="1"/><rect x="978" y="171" width="1" height="1"/><rect x="978" y="173" width="1" height="1"/><rect x="978" y="175" width="1" height="1"/><rect x="978" y="177" width="1" height="1"/><rect x="978" y="179" width="1" height="1"/><rect x="978" y="181" width="1" height="1"/><rect x="978" y="183" width="1" height="1"/><rect x="978" y="185" width="1" height="1"/><rect x="978" y="187" width="1" height="1"/><rect x="978" y="189" width="1" height="1"/><rect x="978" y="191" width="1" height="1"/><rect x="978" y="193" width="1" height="1"/><rect x="978" y="195" width="1" height="1"/><rect x="978" y="197" width="1" height="1"/><rect x="978" y="199" width="1" height="1"/><rect x="978" y="201" width="1" height="1"/><rect x="978" y="203" width="1" height="1"/><rect x="978" y="205" width="1" height="1"/><rect x="978" y="207" width="1" height="1"/><rect x="978" y="209" width="1" height="1"/><rect x="978" y="211" width="1" height="1"/><rect x="978" y="213" width="1" height="1"/><rect x="978" y="215" width="1" height="1"/><rect x="978" y="239" width="1" height="1"/><rect x="978" y="241" width="1" height="1"/><rect x="978" y="243" width="1" height="1"/><rect x="978" y="245" width="1" height="1"/><rect x="978" y="247" width="1" height="1"/><rect x="978" y="249" width="1" height="1"/><rect x="978" y="251" width="1" height="1"/><rect x="978" y="253" width="1" height="1"/><rect x="978" y="255" width="1" height="1"/><rect x="978" y="257" width="1" height="1"/><rect x="978" y="259" width="1" height="1"/><rect x="978" y="261" width="1" height="1"/><rect x="978" y="263" width="1" height="1"/><rect x="978" y="265" width="1" height="1"/><rect x="978" y="267" width="1" height="1"/><rect x="978" y="269" width="1" height="1"/><rect x="978" y="271" width="1" height="1"/><rect x="978" y="273" width="1" height="1"/><rect x="978" y="275" width="1" height="1"/><rect x="978" y="277" width="1" height="1"/><rect x="978" y="279" width="1" height="1"/><rect x="978" y="281" width="1" height="1"/><rect x="978" y="283" width="1" height="1"/><rect x="978" y="285" width="1" height="1"/><rect x="978" y="287" width="1" height="1"/><rect x="978" y="289" width="1" height="1"/><rect x="978" y="291" width="1" height="1"/><rect x="978" y="293" width="1" height="1"/><rect x="978" y="295" width="1" height="1"/><rect x="978" y="383" width="1" height="1"/><rect x="978" y="385" width="1" height="1"/><rect x="978" y="387" width="1" height="1"/><rect x="978" y="389" width="1" height="1"/><rect x="978" y="391" width="1" height="1"/><rect x="978" y="393" width="1" height="1"/><rect x="978" y="395" width="1" height="1"/><rect x="978" y="397" width="1" height="1"/><rect x="978" y="399" width="1" height="1"/><rect x="978" y="401" width="1" height="1"/><rect x="978" y="403" width="1" height="1"/><rect x="978" y="405" width="1" height="1"/><rect x="978" y="407" width="1" height="1"/><rect x="978" y="409" width="1" height="1"/><rect x="978" y="411" width="1" height="1"/><rect x="978" y="413" width="1" height="1"/><rect x="978" y="415" width="1" height="1"/><rect x="978" y="417" width="1" height="1"/><rect x="978" y="419" width="1" height="1"/><rect x="978" y="421" width="1" height="1"/><rect x="978" y="423" width="1" height="1"/><rect x="978" y="425" width="1" height="1"/><rect x="978" y="427" width="1" height="1"/><rect x="978" y="429" width="1" height="1"/><rect x="978" y="431" width="1" height="1"/><rect x="978" y="433" width="1" height="1"/><rect x="978" y="435" width="1" height="1"/><rect x="978" y="437" width="1" height="1"/><rect x="978" y="439" width="1" height="1"/><rect x="978" y="441" width="1" height="1"/><rect x="978" y="443" width="1" height="1"/><rect x="978" y="445" width="1" height="1"/><rect x="978" y="447" width="1" height="1"/><rect x="978" y="449" width="1" height="1"/><rect x="978" y="451" width="1" height="1"/><rect x="978" y="453" width="1" height="1"/><rect x="978" y="455" width="1" height="1"/><rect x="978" y="457" width="1" height="1"/><rect x="978" y="459" width="1" height="1"/><rect x="978" y="461" width="1" height="1"/><rect x="978" y="463" width="1" height="1"/><rect x="978" y="465" width="1" height="1"/><rect x="978" y="467" width="1" height="1"/><rect x="978" y="469" width="1" height="1"/><rect x="978" y="471" width="1" height="1"/><rect x="978" y="473" width="1" height="1"/><rect x="978" y="475" width="1" height="1"/><rect x="978" y="477" width="1" height="1"/><rect x="978" y="479" width="1" height="1"/><rect x="978" y="481" width="1" height="1"/><rect x="978" y="483" width="1" height="1"/><rect x="978" y="485" width="1" height="1"/><rect x="978" y="487" width="1" height="1"/><rect x="978" y="489" width="1" height="1"/><rect x="978" y="491" width="1" height="1"/><rect x="978" y="493" width="1" height="1"/><rect x="978" y="495" width="1" height="1"/><rect x="978" y="497" width="1" height="1"/><rect x="978" y="499" width="1" height="1"/><rect x="978" y="501" width="1" height="1"/><rect x="978" y="503" width="1" height="1"/><rect x="978" y="527" width="1" height="1"/><rect x="978" y="529" width="1" height="1"/><rect x="978" y="531" width="1" height="1"/><rect x="978" y="533" width="1" height="1"/><rect x="978" y="535" width="1" height="1"/><rect x="978" y="537" width="1" height="1"/><rect x="978" y="539" width="1" height="1"/><rect x="978" y="541" width="1" height="1"/><rect x="978" y="543" width="1" height="1"/><rect x="978" y="545" width="1" height="1"/><rect x="978" y="547" width="1" height="1"/><rect x="978" y="549" width="1" height="1"/><rect x="978" y="551" width="1" height="1"/><rect x="978" y="553" width="1" height="1"/><rect x="978" y="555" width="1" height="1"/><rect x="978" y="557" width="1" height="1"/><rect x="978" y="559" width="1" height="1"/><rect x="978" y="561" width="1" height="1"/><rect x="978" y="563" width="1" height="1"/><rect x="978" y="565" width="1" height="1"/><rect x="978" y="567" width="1" height="1"/><rect x="960" y="104" width="1" height="1"/><rect x="962" y="104" width="1" height="1"/><rect x="964" y="104" width="1" height="1"/><rect x="966" y="104" width="1" height="1"/><rect x="968" y="104" width="1" height="1"/><rect x="964" y="120" width="1" height="1"/><rect x="966" y="120" width="1" height="1"/><rect x="968" y="120" width="1" height="1"/><rect x="980" y="136" width="1" height="1"/><rect x="982" y="136" width="1" height="1"/><rect x="984" y="136" width="1" height="1"/><rect x="986" y="136" width="1" height="1"/><rect x="988" y="136" width="1" height="1"/><rect x="980" y="152" width="1" height="1"/><rect x="982" y="152" width="1" height="1"/><rect x="984" y="152" width="1" height="1"/><rect x="986" y="152" width="1" height="1"/><rect x="988" y="152" width="1" height="1"/><rect x="980" y="168" width="1" height="1"/><rect x="982" y="168" width="1" height="1"/><rect x="984" y="168" width="1" height="1"/><rect x="986" y="168" width="1" height="1"/><rect x="988" y="168" width="1" height="1"/><rect x="980" y="184" width="1" height="1"/><rect x="982" y="184" width="1" height="1"/><rect x="984" y="184" width="1" height="1"/><rect x="986" y="184" width="1" height="1"/><rect x="988" y="184" width="1" height="1"/><rect x="980" y="200" width="1" height="1"/><rect x="982" y="200" width="1" height="1"/><rect x="984" y="200" width="1" height="1"/><rect x="986" y="200" width="1" height="1"/><rect x="988" y="200" width="1" height="1"/><rect x="980" y="216" width="1" height="1"/><rect x="982" y="216" width="1" height="1"/><rect x="984" y="216" width="1" height="1"/><rect x="986" y="216" width="1" height="1"/><rect x="988" y="216" width="1" height="1"/><rect x="964" y="232" width="1" height="1"/><rect x="966" y="232" width="1" height="1"/><rect x="968" y="232" width="1" height="1"/><rect x="980" y="248" width="1" height="1"/><rect x="982" y="248" width="1" height="1"/><rect x="984" y="248" width="1" height="1"/><rect x="986" y="248" width="1" height="1"/><rect x="988" y="248" width="1" height="1"/><rect x="980" y="264" width="1" height="1"/><rect x="982" y="264" width="1" height="1"/><rect x="984" y="264" width="1" height="1"/><rect x="986" y="264" width="1" height="1"/><rect x="988" y="264" width="1" height="1"/><rect x="980" y="280" width="1" height="1"/><rect x="982" y="280" width="1" height="1"/><rect x="984" y="280" width="1" height="1"/><rect x="986" y="280" width="1" height="1"/><rect x="988" y="280" width="1" height="1"/><rect x="980" y="296" width="1" height="1"/><rect x="982" y="296" width="1" height="1"/><rect x="984" y="296" width="1" height="1"/><rect x="986" y="296" width="1" height="1"/><rect x="988" y="296" width="1" height="1"/><rect x="960" y="312" width="1" height="1"/><rect x="962" y="312" width="1" height="1"/><rect x="964" y="312" width="1" height="1"/><rect x="966" y="312" width="1" height="1"/><rect x="968" y="312" width="1" height="1"/><rect x="960" y="328" width="1" height="1"/><rect x="962" y="328" width="1" height="1"/><rect x="964" y="328" width="1" height="1"/><rect x="966" y="328" width="1" height="1"/><rect x="968" y="328" width="1" height="1"/><rect x="960" y="344" width="1" height="1"/><rect x="962" y="344" width="1" height="1"/><rect x="964" y="344" width="1" height="1"/><rect x="966" y="344" width="1" height="1"/><rect x="968" y="344" width="1" height="1"/><rect x="964" y="360" width="1" height="1"/><rect x="966" y="360" width="1" height="1"/><rect x="968" y="360" width="1" height="1"/><rect x="964" y="376" width="1" height="1"/><rect x="966" y="376" width="1" height="1"/><rect x="968" y="376" width="1" height="1"/><rect x="980" y="392" width="1" height="1"/><rect x="982" y="392" width="1" height="1"/><rect x="984" y="392" width="1" height="1"/><rect x="986" y="392" width="1" height="1"/><rect x="988" y="392" width="1" height="1"/><rect x="980" y="408" width="1" height="1"/><rect x="982" y="408" width="1" height="1"/><rect x="984" y="408" width="1" height="1"/><rect x="986" y="408" width="1" height="1"/><rect x="988" y="408" width="1" height="1"/><rect x="980" y="424" width="1" height="1"/><rect x="982" y="424" width="1" height="1"/><rect x="984" y="424" width="1" height="1"/><rect x="986" y="424" width="1" height="1"/><rect x="988" y="424" width="1" height="1"/><rect x="980" y="440" width="1" height="1"/><rect x="982" y="440" width="1" height="1"/><rect x="984" y="440" width="1" height="1"/><rect x="986" y="440" width="1" height="1"/><rect x="988" y="440" width="1" height="1"/><rect x="980" y="456" width="1" height="1"/><rect x="982" y="456" width="1" height="1"/><rect x="984" y="456" width="1" height="1"/><rect x="986" y="456" width="1" height="1"/><rect x="988" y="456" width="1" height="1"/><rect x="980" y="472" width="1" height="1"/><rect x="982" y="472" width="1" height="1"/><rect x="984" y="472" width="1" height="1"/><rect x="986" y="472" width="1" height="1"/><rect x="988" y="472" width="1" height="1"/><rect x="980" y="488" width="1" height="1"/><rect x="982" y="488" width="1" height="1"/><rect x="984" y="488" width="1" height="1"/><rect x="986" y="488" width="1" height="1"/><rect x="988" y="488" width="1" height="1"/><rect x="980" y="504" width="1" height="1"/><rect x="982" y="504" width="1" height="1"/><rect x="984" y="504" width="1" height="1"/><rect x="986" y="504" width="1" height="1"/><rect x="988" y="504" width="1" height="1"/><rect x="964" y="520" width="1" height="1"/><rect x="966" y="520" width="1" height="1"/><rect x="968" y="520" width="1" height="1"/><rect x="980" y="536" width="1" height="1"/><rect x="982" y="536" width="1" height="1"/><rect x="984" y="536" width="1" height="1"/><rect x="986" y="536" width="1" height="1"/><rect x="988" y="536" width="1" height="1"/><rect x="980" y="552" width="1" height="1"/><rect x="982" y="552" width="1" height="1"/><rect x="984" y="552" width="1" height="1"/><rect x="986" y="552" width="1" height="1"/><rect x="988" y="552" width="1" height="1"/><rect x="980" y="568" width="1" height="1"/><rect x="982" y="568" width="1" height="1"/><rect x="984" y="568" width="1" height="1"/><rect x="986" y="568" width="1" height="1"/><rect x="988" y="568" width="1" height="1"/><rect x="960" y="584" width="1" height="1"/><rect x="962" y="584" width="1" height="1"/><rect x="964" y="584" width="1" height="1"/><rect x="966" y="584" width="1" height="1"/><rect x="968" y="584" width="1" height="1"/></g></svg>
<div style="left:1142px;top:96px;width:1px;height:495px;background:#a0a0a0;"></div>
<div style="left:1240px;top:96px;width:1px;height:495px;background:#a0a0a0;"></div>
<div style="left:1338px;top:96px;width:1px;height:495px;background:#a0a0a0;"></div>
<div style="left:1136px;top:91px;width:1px;height:2px;background:#a0a0a0;"></div>
<div style="left:1334px;top:91px;width:1px;height:2px;background:#a0a0a0;"></div>
<svg width="1415" height="615"><defs><linearGradient id="gbox" x1="0" y1="0" x2="0" y2="1"><stop offset="0" stop-color="#ffffff"/><stop offset="1" stop-color="#dcdcdc"/></linearGradient></defs><circle cx="978.5" cy="103.5" r="5.2" fill="#000"/><circle cx="977.8" cy="102.8" r="5.2" fill="#00e000"/><rect x="954.5" y="116.5" width="8" height="8" rx="1" fill="url(#gbox)" stroke="#919191"/><rect x="956" y="120" width="5" height="1" fill="#3f5fa8"/><rect x="974" y="115" width="8" height="12" fill="#000"/><rect x="973.5" y="114.5" width="7" height="11" fill="#00e000" stroke="#707070"/><rect x="977" y="116" width="1" height="1" fill="#808080"/><rect x="977" y="119" width="1" height="1" fill="#808080"/><rect x="977" y="122" width="1" height="1" fill="#808080"/><circle cx="998.5" cy="135.5" r="5.2" fill="#000"/><circle cx="997.8" cy="134.8" r="5.2" fill="#0000ff"/><circle cx="998.5" cy="151.5" r="5.2" fill="#000"/><circle cx="997.8" cy="150.8" r="5.2" fill="#0000ff"/><circle cx="998.5" cy="167.5" r="5.2" fill="#000"/><circle cx="997.8" cy="166.8" r="5.2" fill="#0000ff"/><circle cx="998.5" cy="183.5" r="5.2" fill="#000"/><circle cx="997.8" cy="182.8" r="5.2" fill="#0000ff"/><circle cx="998.5" cy="199.5" r="5.2" fill="#000"/><circle cx="997.8" cy="198.8" r="5.2" fill="#0000ff"/><circle cx="998.5" cy="215.5" r="5.2" fill="#000"/><circle cx="997.8" cy="214.8" r="5.2" fill="#0000ff"/><rect x="954.5" y="228.5" width="8" height="8" rx="1" fill="url(#gbox)" stroke="#919191"/><rect x="956" y="232" width="5" height="1" fill="#3f5fa8"/><rect x="974" y="227" width="8" height="12" fill="#000"/><rect x="973.5" y="226.5" width="7" height="11" fill="#00e000" stroke="#707070"/><rect x="977" y="228" width="1" height="1" fill="#808080"/><rect x="977" y="231" width="1" height="1" fill="#808080"/><rect x="977" y="234" width="1" height="1" fill="#808080"/><circle cx="998.5" cy="247.5" r="5.2" fill="#000"/><circle cx="997.8" cy="246.8" r="5.2" fill="#0000ff"/><circle cx="998.5" cy="263.5" r="5.2" fill="#000"/><circle cx="997.8" cy="262.8" r="5.2" fill="#0000ff"/><circle cx="998.5" cy="279.5" r="5.2" fill="#000"/><circle cx="997.8" cy="278.8" r="5.2" fill="#0000ff"/><circle cx="998.5" cy="295.5" r="5.2" fill="#000"/><circle cx="997.8" cy="294.8" r="5.2" fill="#0000ff"/><circle cx="978.5" cy="311.5" r="5.2" fill="#000"/><circle cx="977.8" cy="310.8" r="5.2" fill="#00e000"/><circle cx="978.5" cy="327.5" r="5.2" fill="#000"/><circle cx="977.8" cy="326.8" r="5.2" fill="#00e000"/><circle cx="978.5" cy="343.5" r="5.2" fill="#000"/><circle cx="977.8" cy="342.8" r="5.2" fill="#00e000"/><rect x="954.5" y="356.5" width="8" height="8" rx="1" fill="url(#gbox)" stroke="#919191"/><rect x="956" y="360" width="5" height="1" fill="#3f5fa8"/><rect x="958" y="358" width="1" height="5" fill="#3f5fa8"/><rect x="974" y="355" width="8" height="12" fill="#000"/><rect x="973.5" y="354.5" width="7" height="11" fill="#00e000" stroke="#707070"/><rect x="977" y="356" width="1" height="1" fill="#808080"/><rect x="977" y="359" width="1" height="1" fill="#808080"/><rect x="977" y="362" width="1" height="1" fill="#808080"/><rect x="954.5" y="372.5" width="8" height="8" rx="1" fill="url(#gbox)" stroke="#919191"/><rect x="956" y="376" width="5" height="1" fill="#3f5fa8"/><rect x="974" y="371" width="8" height="12" fill="#000"/><rect x="973.5" y="370.5" width="7" height="11" fill="#00e000" stroke="#707070"/><rect x="977" y="372" width="1" height="1" fill="#808080"/><rect x="977" y="375" width="1" height="1" fill="#808080"/><rect x="977" y="378" width="1" height="1" fill="#808080"/><circle cx="998.5" cy="391.5" r="5.2" fill="#000"/><circle cx="997.8" cy="390.8" r="5.2" fill="#0000ff"/><circle cx="998.5" cy="407.5" r="5.2" fill="#000"/><circle cx="997.8" cy="406.8" r="5.2" fill="#0000ff"/><circle cx="998.5" cy="423.5" r="5.2" fill="#000"/><circle cx="997.8" cy="422.8" r="5.2" fill="#0000ff"/><circle cx="998.5" cy="439.5" r="5.2" fill="#000"/><circle cx="997.8" cy="438.8" r="5.2" fill="#0000ff"/><circle cx="998.5" cy="455.5" r="5.2" fill="#000"/><circle cx="997.8" cy="454.8" r="5.2" fill="#0000ff"/><circle cx="998.5" cy="471.5" r="5.2" fill="#000"/><circle cx="997.8" cy="470.8" r="5.2" fill="#0000ff"/><circle cx="998.5" cy="487.5" r="5.2" fill="#000"/><circle cx="997.8" cy="486.8" r="5.2" fill="#0000ff"/><circle cx="998.5" cy="503.5" r="5.2" fill="#000"/><circle cx="997.8" cy="502.8" r="5.2" fill="#0000ff"/><rect x="954.5" y="516.5" width="8" height="8" rx="1" fill="url(#gbox)" stroke="#919191"/><rect x="956" y="520" width="5" height="1" fill="#3f5fa8"/><path d="M984 515h1.5v8l-4 4.5h-9.5v-1.5h9z" fill="#000"/><path d="M971.5 517.5h9.5v8h-9.5z" fill="#00ff00" stroke="#8c7f8c"/><path d="M971.5 517.5l2.5 -3h9.5l-2.5 3z" fill="#00ff00" stroke="#8c7f8c" stroke-linejoin="round"/><path d="M981 517.5l2.5 -3v8l-2.5 3z" fill="#00ff00" stroke="#8c7f8c" stroke-linejoin="round"/><circle cx="998.5" cy="535.5" r="5.2" fill="#000"/><circle cx="997.8" cy="534.8" r="5.2" fill="#0000ff"/><circle cx="998.5" cy="551.5" r="5.2" fill="#000"/><circle cx="997.8" cy="550.8" r="5.2" fill="#0000ff"/><circle cx="998.5" cy="567.5" r="5.2" fill="#000"/><circle cx="997.8" cy="566.8" r="5.2" fill="#0000ff"/><path d="M973 581l6 3l-6 3z" fill="#606060"/></svg>
<div style="left:4px;top:611px;width:1409px;height:1px;background:#ffffff;"></div>
<div style="left:4px;top:612px;width:1409px;height:3px;background:#f0f0f0;"></div>
</body></html>
